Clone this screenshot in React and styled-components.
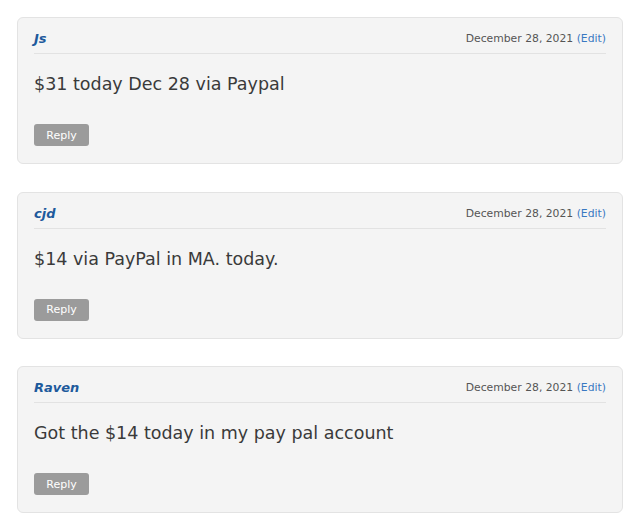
import React from "react";
import styled, { createGlobalStyle } from "styled-components";

const GlobalStyle = createGlobalStyle`
    body {
        margin: 0;
        background: #fff;
        font-family: "DejaVu Sans", "Liberation Sans", sans-serif;
    }
`

const List = styled.div`
    display: flex;
    flex-direction: column;
    gap: 27.5px;
    padding: 17px 15px 17px 17px;
`
const Card = styled.div`
    background: #f4f4f4;
    border: 1px solid #e3e3e3;
    border-radius: 6px;
    padding: 10px 16px 17px 16px;
`
const Header = styled.div`
    display: flex;
    justify-content: space-between;
    align-items: flex-start;
    height: 25px;
    line-height: 21px;
    border-bottom: 1px solid #e2e2e2;
`
const Author = styled.span`
    color: #1d5a9c;
    font-weight: 700;
    font-style: italic;
    font-size: 13px;
`
const Meta = styled.span`
    color: #555;
    font-size: 10.8px;
    & > a {
        color: #3a78c2;
        text-decoration: none;
    }
`
const Body = styled.p`
    margin: 18px 0 28px;
    color: #3a3a3a;
    font-size: 17.5px;
    line-height: 24px;
`
const ReplyButton = styled.button`
    display: block;
    width: 55px;
    height: 22px;
    border: none;
    border-radius: 3px;
    background: #9b9b9b;
    color: #fff;
    font-family: inherit;
    font-size: 11px;
    padding: 0;
`

const comments = [
    { id: 1, author: "Js", date: "December 28, 2021", text: "$31 today Dec 28 via Paypal" },
    { id: 2, author: "cjd", date: "December 28, 2021", text: "$14 via PayPal in MA. today." },
    { id: 3, author: "Raven", date: "December 28, 2021", text: "Got the $14 today in my pay pal account" },
]

function App () {
    return (
        <>
            <GlobalStyle />
            <List>
                {
                    comments.map(el => (
                        <Card key={el.id}>
                            <Header>
                                <Author>{el.author}</Author>
                                <Meta>{el.date} <a href="#">(Edit)</a></Meta>
                            </Header>
                            <Body>{el.text}</Body>
                            <ReplyButton>Reply</ReplyButton>
                        </Card>
                    ))
                }
            </List>
        </>
    )
}

export default App
